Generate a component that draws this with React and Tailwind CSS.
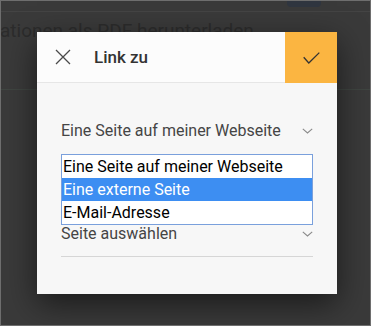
import { useState } from 'react'

const font = { fontFamily: 'Roboto, "Noto Sans", sans-serif' }

function Chevron({ className }) {
  return (
    <svg className={className} width="11" height="6" viewBox="0 0 11 6" fill="none">
      <path d="M0.8 0.8 L5.5 5 L10.2 0.8" stroke="#8a8a8a" strokeWidth="1.1" />
    </svg>
  )
}

function SelectRow({ label, className = '' }) {
  return (
    <div className={`flex items-center justify-between h-6 leading-6 text-[16px] text-[#454545] ${className}`}>
      <span>{label}</span>
      <Chevron />
    </div>
  )
}

const options = ['Eine Seite auf meiner Webseite', 'Eine externe Seite', 'E-Mail-Adresse']

export default function App() {
  const [selected, setSelected] = useState(1)

  return (
    <div
      className="relative w-[371px] h-[326px] overflow-hidden bg-[#3a3a3a] border border-[#6e6e6e]"
      style={font}
    >
      {/* page behind the overlay */}
      <div className="h-[11px] border-b border-[#444444] relative">
        <div className="absolute left-[286px] top-0 w-[34px] h-[6px] rounded-b-sm bg-[#303640]" />
      </div>
      <div className="pt-[7px] text-[19px] leading-6 text-[#2c2c2c] -ml-[1px] whitespace-nowrap">
        ationen als PDF herunterladen
      </div>
      <div className="mt-[46px] h-px bg-[#3f4541]" />

      {/* dialog */}
      <div className="absolute left-[36px] top-[31px] w-[300px] h-[262px] bg-[#f7f7f7] shadow-[0_10px_30px_rgba(0,0,0,0.55)]">
        <div className="flex h-[51px] bg-[#fcfcfc] border-b border-[#e6e6e6]">
          <div className="flex items-center pl-[18px] w-[57px]">
            <svg width="16" height="16" viewBox="0 0 16 16" fill="none">
              <path d="M1 1 L15 15 M15 1 L1 15" stroke="#4a4a4a" strokeWidth="1.3" />
            </svg>
          </div>
          <div className="flex-1 flex items-center text-[17px] font-medium text-[#333333] pt-[1px]">
            Link zu
          </div>
          <button className="w-[52px] h-[51px] bg-[#fbb541] flex items-center justify-center">
            <svg width="17" height="12" viewBox="0 0 17 12" fill="none">
              <path d="M0.7 5.3 L5.8 11 L16.3 0.6" stroke="#333333" strokeWidth="1.3" />
            </svg>
          </button>
        </div>

        <div className="relative px-6 pt-[36px]">
          <SelectRow label="Eine Seite auf meiner Webseite" />
          <SelectRow label="Seite auswählen" className="mt-[79px]" />
          <div className="mt-[10px] h-px bg-[#d6d6d6]" />

          {/* open native dropdown list */}
          <ul className="absolute left-6 right-6 top-[71px] bg-white border border-[#7aa0dc] text-[16px] text-black">
            {options.map((o, i) => (
              <li
                key={o}
                onMouseEnter={() => setSelected(i)}
                className={`h-[23px] leading-[23px] pl-[1px] ${i === selected ? 'bg-[#3d8ef2] text-white' : ''}`}
              >
                {o}
              </li>
            ))}
          </ul>
        </div>
      </div>
    </div>
  )
}
